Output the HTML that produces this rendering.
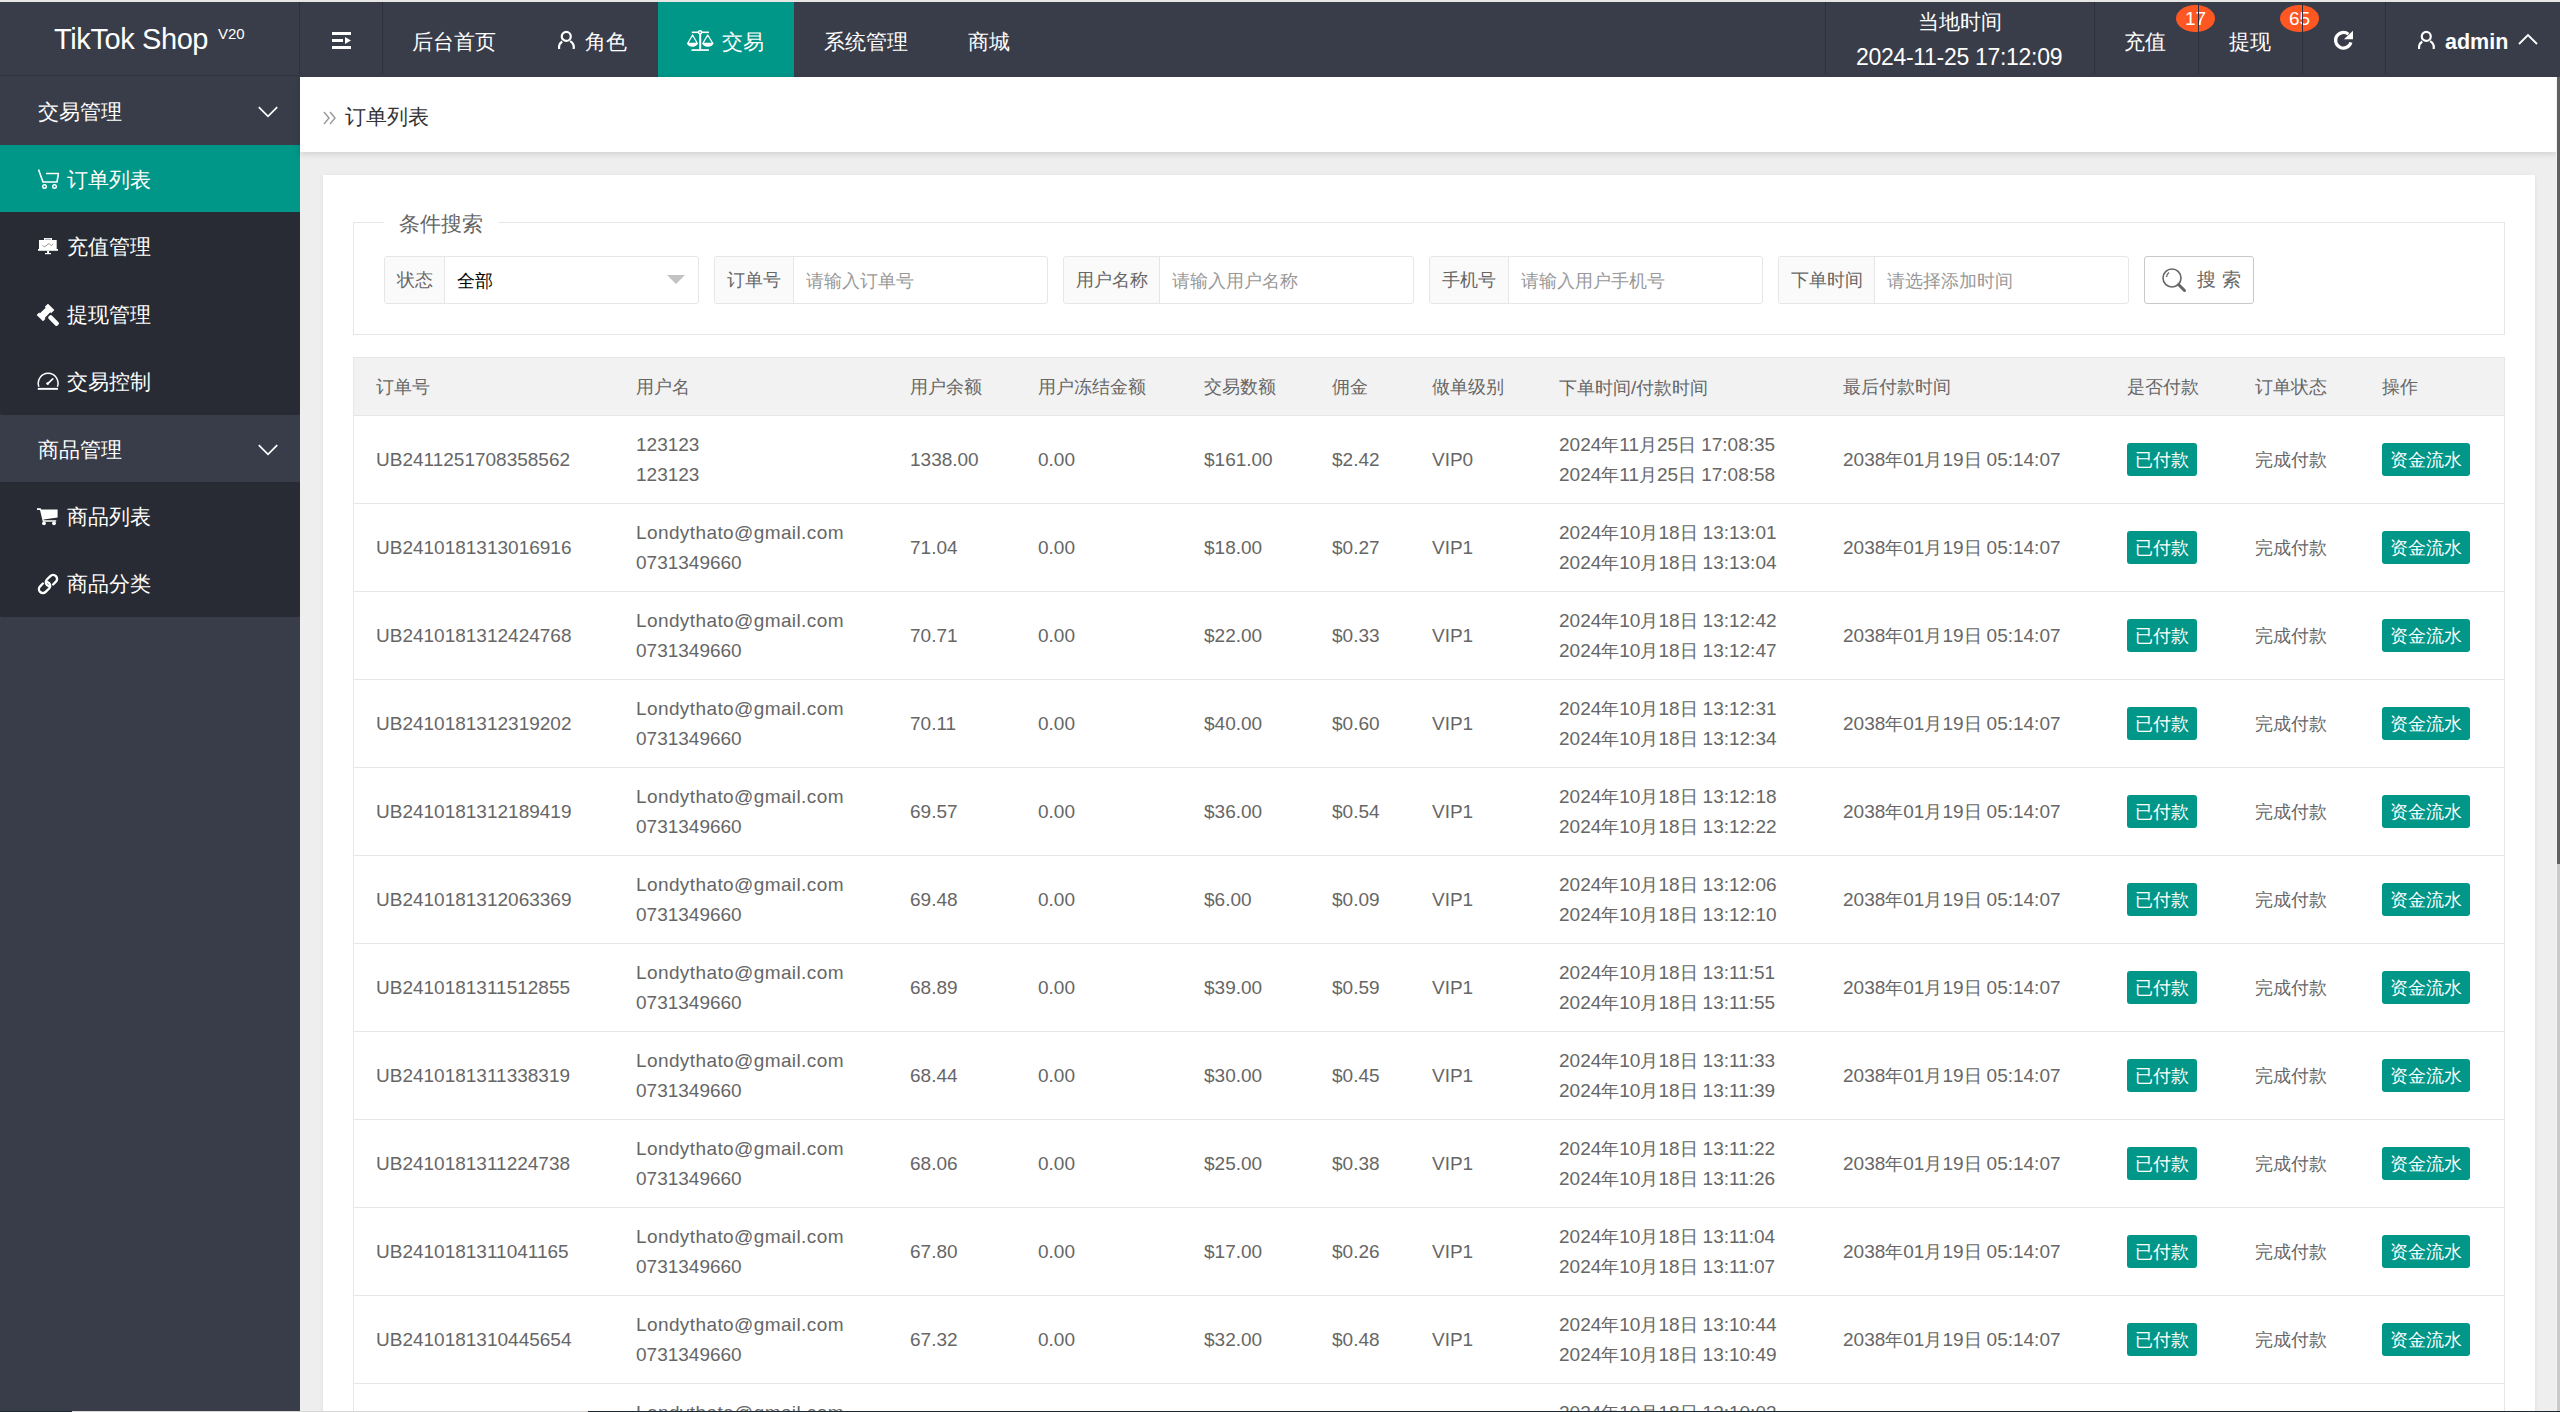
<!DOCTYPE html>
<html><head><meta charset="utf-8"><title>订单列表</title>
<style>
*{margin:0;padding:0;box-sizing:border-box}
html,body{width:2560px;height:1412px;overflow:hidden}
body{position:relative;background:#EEEEEE;font-family:"Liberation Sans",sans-serif;color:#666}
.abs{position:absolute}
#topstrip{position:absolute;left:0;top:0;width:2560px;height:2px;background:#E6E7E4}
#header{position:absolute;left:0;top:2px;width:2560px;height:75px;background:#393D49}
#header .sep{position:absolute;top:0;width:1px;height:72px;background:#2E313B}
#logo{position:absolute;left:0;top:0;width:299px;height:74px;border-bottom:1px solid #30333d}
#logo .t{position:absolute;left:54px;top:19px;font-size:29px;letter-spacing:-0.4px;color:#fff;line-height:36px;white-space:nowrap}
#logo .v{position:absolute;left:218px;top:24px;font-size:15px;color:#fff;line-height:16px}
.nav{position:absolute;top:2px;height:75px;line-height:75px;color:#fff;font-size:21px;white-space:nowrap}
.navact{position:absolute;left:658px;top:0;width:136px;height:75px;background:#009688}
#side{position:absolute;left:0;top:77px;width:300px;height:1335px;background:#393D49}
.sp{position:absolute;left:0;width:300px;height:68px;background:#393D49}
.sc{position:absolute;left:0;width:300px;background:#282B33;border-radius:0 0 2px 2px}
.si{position:absolute;left:0;width:300px;height:67px;color:#fff;font-size:21px;white-space:nowrap}
.si span.tx{position:absolute;left:67px;top:1px;line-height:67px}
.sact{background:#009688}
.chev{position:absolute;left:258px;width:20px;height:13px}
#crumb{position:absolute;left:300px;top:77px;width:2257px;height:75px;background:#fff;box-shadow:0 2px 6px rgba(0,0,0,.13)}
#crumb .ar{position:absolute;left:23px;top:29px}
#crumb .tx{position:absolute;left:345px;top:0}
#card{position:absolute;left:323px;top:175px;width:2212px;height:1300px;background:#fff;box-shadow:0 1px 4px rgba(0,0,0,.08)}
#fs{position:absolute;left:353px;top:222px;width:2152px;height:113px;border:1px solid #E6E6E6}
#legend{position:absolute;left:384px;top:209px;width:114px;height:30px;background:#fff;font-size:21px;color:#666;line-height:30px;text-align:center}
.ig{position:absolute;top:256px;height:48px;border:1px solid #E6E6E6;border-radius:3px;background:#fff;font-size:18px}
.ig .lb{position:absolute;left:0;top:0;height:46px;background:#FAFAFA;border-right:1px solid #E6E6E6;color:#666;line-height:46px;text-align:center;border-radius:3px 0 0 3px}
.ig .ph{position:absolute;top:1px;line-height:46px;color:#999}
#btn{position:absolute;left:2144px;top:256px;width:110px;height:48px;border:1px solid #C9C9C9;border-radius:3px;background:#fff;font-size:19px;color:#666;line-height:46px}
#table{position:absolute;left:0;top:0}
#thead{position:absolute;left:353px;top:357px;width:2152px;height:59px;background:#F2F2F2;border:1px solid #E6E6E6}
#tborder{position:absolute;left:353px;top:357px;width:2152px;height:1100px;border-left:1px solid #E6E6E6;border-right:1px solid #E6E6E6}
.th{position:absolute;top:359px;line-height:57px;font-size:18px;color:#666;white-space:nowrap}
.td{position:absolute;font-size:18px;line-height:30px;color:#666;white-space:nowrap}
.l{font-size:19px}
.badge{position:absolute;height:33px;line-height:35px;padding:0 8px;background:#009688;color:#fff;font-size:18px;border-radius:3px;white-space:nowrap}
.rowline{position:absolute;left:353px;width:2152px;height:1px;background:#E6E6E6}
#sb{position:absolute;left:2557px;top:77px;width:3px;height:1334px;background:#CACACA}
#sbt{position:absolute;left:2557px;top:77px;width:3px;height:787px;background:#606060}
#sbw{position:absolute;left:2556px;top:77px;width:1px;height:1334px;background:#F4F4F4}
#bot1{position:absolute;left:0;top:1411px;width:2560px;height:1px;background:#1E2830}
#bot2{position:absolute;left:72px;top:1411px;width:516px;height:1px;background:#D6D6D6}

</style></head>
<body>
<div id="topstrip"></div>
<div id="header">
  <div id="logo"><span class="t">TikTok Shop</span><span class="v">V20</span></div>
  <div class="sep" style="left:299px"></div>
  <div class="sep" style="left:382px"></div>
  <svg class="abs" style="left:332px;top:30px" width="20" height="17" viewBox="0 0 20 17"><rect x="0" y="0" width="19" height="3" fill="#fff"/><rect x="0" y="7" width="11" height="3" fill="#fff"/><path d="M13 5 L19 8.5 L13 12 Z" fill="#fff"/><rect x="0" y="14" width="19" height="3" fill="#fff"/></svg>
  <div class="nav" style="left:412px">后台首页</div>
  <svg class="abs" style="left:558px;top:26px" width="18" height="21" viewBox="0 0 18 21"><circle cx="8.25" cy="8.4" r="4.5" fill="none" stroke="#fff" stroke-width="2.2"/><path d="M1.21 21 A7.35 7.35 0 0 1 4.18 13.48 M12.07 13.13 A7.35 7.35 0 0 1 15.59 21" fill="none" stroke="#fff" stroke-width="2.2"/></svg>
  <div class="nav" style="left:585px">角色</div>
  <div class="navact"></div>
  <svg class="abs" style="left:686px;top:28px" width="28" height="22" viewBox="0 0 28 22"><rect x="5.7" y="1.5" width="17.2" height="1.6" fill="#fff"/><circle cx="14.1" cy="2.3" r="2.3" fill="#fff"/><circle cx="14.1" cy="2.3" r="0.8" fill="#009688"/><rect x="13.2" y="3" width="2" height="16.5" fill="#fff"/><rect x="5.5" y="19.2" width="17.4" height="1.7" fill="#fff"/><path d="M6.6 5 L1.6 13.5 L11.4 13.5 Z M21.7 5 L16.8 13.5 L26.9 13.5 Z" fill="none" stroke="#fff" stroke-width="1.3" stroke-linejoin="round"/><path d="M1.2 13.3 A5.2 3.4 0 0 0 11.6 13.3 Z M16.4 13.3 A5.45 3.4 0 0 0 27.3 13.3 Z" fill="#fff"/></svg>
  <div class="nav" style="left:722px">交易</div>
  <div class="nav" style="left:824px">系统管理</div>
  <div class="nav" style="left:968px">商城</div>
  <div class="sep" style="left:1825px"></div>
  <div class="abs" style="left:1918px;top:6px;font-size:21px;color:#fff;line-height:28px">当地时间</div>
  <div class="abs" style="left:1856px;top:41px;font-size:23px;letter-spacing:-0.3px;color:#fff;line-height:28px">2024-11-25 17:12:09</div>
  <div class="sep" style="left:2094px"></div>
  <div class="nav" style="left:2124px">充值</div>
  <div class="abs" style="left:2176px;top:3px;width:39px;height:27px;border-radius:50%;background:#FF5722;color:#fff;font-size:19px;line-height:27px;text-align:center">17</div>
  <div class="sep" style="left:2198px"></div>
  <div class="nav" style="left:2229px">提现</div>
  <div class="abs" style="left:2280px;top:3px;width:39px;height:27px;border-radius:50%;background:#FF5722;color:#fff;font-size:19px;line-height:27px;text-align:center">65</div>
  <div class="sep" style="left:2302px"></div>
  <svg class="abs" style="left:2333px;top:28px" width="22" height="22" viewBox="0 0 22 22"><path d="M15.4 4.3 A7.8 7.8 0 1 0 17.9 12.3" fill="none" stroke="#fff" stroke-width="3.2"/><path d="M20 0.8 L20 9.3 L10.9 9.3 Z" fill="#fff"/></svg>
  <div class="sep" style="left:2385px"></div>
  <svg class="abs" style="left:2418px;top:26px" width="18" height="21" viewBox="0 0 18 21"><circle cx="8.25" cy="8.4" r="4.5" fill="none" stroke="#fff" stroke-width="2.2"/><path d="M1.21 21 A7.35 7.35 0 0 1 4.18 13.48 M12.07 13.13 A7.35 7.35 0 0 1 15.59 21" fill="none" stroke="#fff" stroke-width="2.2"/></svg>
  <div class="nav" style="left:2445px;top:3px;font-weight:bold;font-size:21.5px">admin</div>
  <svg class="abs" style="left:2518px;top:31px" width="20" height="12" viewBox="0 0 20 12"><path d="M1 11 L10 2 L19 11" fill="none" stroke="#fff" stroke-width="1.8"/></svg>
</div>

<div id="side">
  <div class="sp" style="top:0"><span class="abs" style="left:38px;top:1px;line-height:68px;color:#fff;font-size:21px">交易管理</span>
    <svg class="chev" style="top:29px" width="20" height="13" viewBox="0 0 20 13"><path d="M0.8 1.2 L10 10.4 L19.2 1.2" fill="none" stroke="#fff" stroke-width="1.7"/></svg></div>
  <div class="sc" style="top:68px;height:270px">
    <div class="si sact" style="top:0">
      <svg class="abs" style="left:38px;top:24px" width="21" height="21" viewBox="0 0 21 21"><path d="M0.5 0.5 L5 13 L19 13 L20.5 4.5 L8 4.5" fill="none" stroke="#fff" stroke-width="1.6"/><circle cx="6.5" cy="17.5" r="1.8" fill="none" stroke="#fff" stroke-width="1.4"/><circle cx="16.5" cy="17.5" r="1.8" fill="none" stroke="#fff" stroke-width="1.4"/></svg>
      <span class="tx">订单列表</span></div>
    <div class="si" style="top:67px">
      <svg class="abs" style="left:38px;top:25px" width="20" height="18" viewBox="0 0 20 18"><rect x="6" y="1" width="8" height="2.5" fill="#fff"/><rect x="7" y="1.8" width="6" height="0.8" fill="#888"/><rect x="1" y="3" width="17.7" height="10" fill="#fff"/><rect x="0" y="12" width="20" height="1.8" fill="#fff"/><rect x="9.1" y="13.8" width="2" height="2.2" fill="#fff"/><rect x="7" y="16" width="6" height="1.2" fill="#fff"/><path d="M4.4 8.5 L6.5 9.8 L9 8 L11 6.5 L12.5 7.8 L13.5 8.6 L15 6.7" fill="none" stroke="#8a8a8a" stroke-width="0.9"/></svg>
      <span class="tx">充值管理</span></div>
    <div class="si" style="top:135px">
      <svg class="abs" style="left:37px;top:24px;overflow:visible" width="24" height="24" viewBox="0 0 24 24"><g transform="rotate(-45 8.5 8.5)" fill="#fff"><path d="M0.5 4 L4 4 L4 5.2 L12 5.2 L12 4 L16.5 4 L16.5 13 L12 13 L12 11.8 L4 11.8 L4 13 L0.5 13 Z"/><rect x="6.2" y="13.6" width="4.6" height="12.6" rx="1.6"/></g></svg>
      <span class="tx">提现管理</span></div>
    <div class="si" style="top:202px">
      <svg class="abs" style="left:37px;top:24px" width="22" height="20" viewBox="0 0 22 20"><path d="M1.89 15.75 A9.9 9.9 0 1 1 20.41 15.75" fill="none" stroke="#fff" stroke-width="1.5"/><rect x="0.8" y="16.9" width="20.2" height="1.9" fill="#fff"/><circle cx="10.7" cy="12.6" r="1.4" fill="#fff"/><path d="M10.7 12.6 L15.8 7.8" stroke="#fff" stroke-width="1.6" stroke-linecap="round"/></svg>
      <span class="tx">交易控制</span></div>
  </div>
  <div class="sp" style="top:338px;height:67px"><span class="abs" style="left:38px;top:1px;line-height:67px;color:#fff;font-size:21px">商品管理</span>
    <svg class="chev" style="top:29px" width="20" height="13" viewBox="0 0 20 13"><path d="M0.8 1.2 L10 10.4 L19.2 1.2" fill="none" stroke="#fff" stroke-width="1.7"/></svg></div>
  <div class="sc" style="top:405px;height:135px">
    <div class="si" style="top:0">
      <svg class="abs" style="left:37px;top:26px" width="21" height="18" viewBox="0 0 21 18"><path d="M0 0.3 L3.6 0.3 L4.3 1.6 L20.6 1.6 L20.6 9.6 L6.6 11.4 L7 12.2 L19.2 12.2 L19.2 13.8 L5.8 13.8 L3 2 L0 2 Z" fill="#fff"/><circle cx="7" cy="15.3" r="1.9" fill="#fff"/><circle cx="17" cy="15.3" r="1.9" fill="#fff"/></svg>
      <span class="tx">商品列表</span></div>
    <div class="si" style="top:67px">
      <svg class="abs" style="left:35px;top:22px" width="26" height="26" viewBox="0 0 23 23"><g transform="rotate(-45 11.5 11.5)" fill="none" stroke="#fff" stroke-width="2.1" stroke-linecap="round"><path d="M8.6 8 L5.1 8 A3.5 3.5 0 0 0 5.1 15 L9.4 15 A3.5 3.5 0 0 0 12.3 9.6"/><path d="M14.4 15 L17.9 15 A3.5 3.5 0 0 0 17.9 8 L13.6 8 A3.5 3.5 0 0 0 10.7 13.4"/></g></svg>
      <span class="tx">商品分类</span></div>
  </div>
</div>

<div id="crumb">
  <svg class="ar" style="top:34px" width="14" height="14" viewBox="0 0 14 14"><path d="M1 1 L6 7 L1 13 M7 1 L12 7 L7 13" fill="none" stroke="#999" stroke-width="1.4"/></svg>
  <span class="abs" style="left:45px;top:2px;line-height:75px;font-size:21px;color:#333">订单列表</span>
</div>

<div id="card"></div>
<div id="fs"></div>
<div id="legend">条件搜索</div>

<div class="ig" style="left:384px;width:315px">
  <div class="lb" style="width:60px">状态</div>
  <div class="ph" style="left:72px;color:#000">全部</div>
  <svg class="abs" style="left:282px;top:18px" width="18" height="10" viewBox="0 0 18 10"><path d="M0 0 L18 0 L9 9 Z" fill="#C2C2C2"/></svg>
</div>
<div class="ig" style="left:714px;width:334px">
  <div class="lb" style="width:79px">订单号</div>
  <div class="ph" style="left:91px">请输入订单号</div>
</div>
<div class="ig" style="left:1063px;width:351px">
  <div class="lb" style="width:96px">用户名称</div>
  <div class="ph" style="left:108px">请输入用户名称</div>
</div>
<div class="ig" style="left:1429px;width:334px">
  <div class="lb" style="width:79px">手机号</div>
  <div class="ph" style="left:91px">请输入用户手机号</div>
</div>
<div class="ig" style="left:1778px;width:351px">
  <div class="lb" style="width:96px">下单时间</div>
  <div class="ph" style="left:108px">请选择添加时间</div>
</div>
<div id="btn">
  <svg class="abs" style="left:17px;top:11px" width="25" height="25" viewBox="0 0 25 25"><circle cx="10" cy="10" r="9" fill="none" stroke="#666" stroke-width="1.6"/><path d="M4.5 9 A6 6 0 0 1 7 4.5" fill="none" stroke="#666" stroke-width="1.3"/><path d="M16.5 16.5 L22.5 22.5" stroke="#666" stroke-width="3" stroke-linecap="round"/></svg>
  <span class="abs" style="left:52px;top:0;letter-spacing:6px">搜索</span>
</div>

<div id="tborder"></div>
<div id="table">
<div id="thead"></div>
<div class="th" style="left:376px">订单号</div>
<div class="th" style="left:636px">用户名</div>
<div class="th" style="left:910px">用户余额</div>
<div class="th" style="left:1038px">用户冻结金额</div>
<div class="th" style="left:1204px">交易数额</div>
<div class="th" style="left:1332px">佣金</div>
<div class="th" style="left:1432px">做单级别</div>
<div class="th" style="left:1559px">下单时间<span class="l">/</span>付款时间</div>
<div class="th" style="left:1843px">最后付款时间</div>
<div class="th" style="left:2127px">是否付款</div>
<div class="th" style="left:2255px">订单状态</div>
<div class="th" style="left:2382px">操作</div>
<div class="td" style="left:376px;top:445px"><span class="l">UB2411251708358562</span></div>
<div class="td" style="left:636px;top:430px"><span class="l">123123</span><br><span class="l">123123</span></div>
<div class="td" style="left:910px;top:445px"><span class="l">1338.00</span></div>
<div class="td" style="left:1038px;top:445px"><span class="l">0.00</span></div>
<div class="td" style="left:1204px;top:445px"><span class="l">$161.00</span></div>
<div class="td" style="left:1332px;top:445px"><span class="l">$2.42</span></div>
<div class="td" style="left:1432px;top:445px"><span class="l">VIP0</span></div>
<div class="td" style="left:1559px;top:430px"><span class="l">2024</span>年<span class="l">11</span>月<span class="l">25</span>日 <span class="l">17:08:35</span><br><span class="l">2024</span>年<span class="l">11</span>月<span class="l">25</span>日 <span class="l">17:08:58</span></div>
<div class="td" style="left:1843px;top:445px"><span class="l">2038</span>年<span class="l">01</span>月<span class="l">19</span>日 <span class="l">05:14:07</span></div>
<div class="badge" style="left:2127px;top:443px">已付款</div>
<div class="td" style="left:2255px;top:445px">完成付款</div>
<div class="badge" style="left:2382px;top:443px">资金流水</div>
<div class="rowline" style="top:503px"></div>
<div class="td" style="left:376px;top:533px"><span class="l">UB2410181313016916</span></div>
<div class="td" style="left:636px;top:518px"><span class="l" style="letter-spacing:0.4px">Londythato@gmail.com</span><br><span class="l">0731349660</span></div>
<div class="td" style="left:910px;top:533px"><span class="l">71.04</span></div>
<div class="td" style="left:1038px;top:533px"><span class="l">0.00</span></div>
<div class="td" style="left:1204px;top:533px"><span class="l">$18.00</span></div>
<div class="td" style="left:1332px;top:533px"><span class="l">$0.27</span></div>
<div class="td" style="left:1432px;top:533px"><span class="l">VIP1</span></div>
<div class="td" style="left:1559px;top:518px"><span class="l">2024</span>年<span class="l">10</span>月<span class="l">18</span>日 <span class="l">13:13:01</span><br><span class="l">2024</span>年<span class="l">10</span>月<span class="l">18</span>日 <span class="l">13:13:04</span></div>
<div class="td" style="left:1843px;top:533px"><span class="l">2038</span>年<span class="l">01</span>月<span class="l">19</span>日 <span class="l">05:14:07</span></div>
<div class="badge" style="left:2127px;top:531px">已付款</div>
<div class="td" style="left:2255px;top:533px">完成付款</div>
<div class="badge" style="left:2382px;top:531px">资金流水</div>
<div class="rowline" style="top:591px"></div>
<div class="td" style="left:376px;top:621px"><span class="l">UB2410181312424768</span></div>
<div class="td" style="left:636px;top:606px"><span class="l" style="letter-spacing:0.4px">Londythato@gmail.com</span><br><span class="l">0731349660</span></div>
<div class="td" style="left:910px;top:621px"><span class="l">70.71</span></div>
<div class="td" style="left:1038px;top:621px"><span class="l">0.00</span></div>
<div class="td" style="left:1204px;top:621px"><span class="l">$22.00</span></div>
<div class="td" style="left:1332px;top:621px"><span class="l">$0.33</span></div>
<div class="td" style="left:1432px;top:621px"><span class="l">VIP1</span></div>
<div class="td" style="left:1559px;top:606px"><span class="l">2024</span>年<span class="l">10</span>月<span class="l">18</span>日 <span class="l">13:12:42</span><br><span class="l">2024</span>年<span class="l">10</span>月<span class="l">18</span>日 <span class="l">13:12:47</span></div>
<div class="td" style="left:1843px;top:621px"><span class="l">2038</span>年<span class="l">01</span>月<span class="l">19</span>日 <span class="l">05:14:07</span></div>
<div class="badge" style="left:2127px;top:619px">已付款</div>
<div class="td" style="left:2255px;top:621px">完成付款</div>
<div class="badge" style="left:2382px;top:619px">资金流水</div>
<div class="rowline" style="top:679px"></div>
<div class="td" style="left:376px;top:709px"><span class="l">UB2410181312319202</span></div>
<div class="td" style="left:636px;top:694px"><span class="l" style="letter-spacing:0.4px">Londythato@gmail.com</span><br><span class="l">0731349660</span></div>
<div class="td" style="left:910px;top:709px"><span class="l">70.11</span></div>
<div class="td" style="left:1038px;top:709px"><span class="l">0.00</span></div>
<div class="td" style="left:1204px;top:709px"><span class="l">$40.00</span></div>
<div class="td" style="left:1332px;top:709px"><span class="l">$0.60</span></div>
<div class="td" style="left:1432px;top:709px"><span class="l">VIP1</span></div>
<div class="td" style="left:1559px;top:694px"><span class="l">2024</span>年<span class="l">10</span>月<span class="l">18</span>日 <span class="l">13:12:31</span><br><span class="l">2024</span>年<span class="l">10</span>月<span class="l">18</span>日 <span class="l">13:12:34</span></div>
<div class="td" style="left:1843px;top:709px"><span class="l">2038</span>年<span class="l">01</span>月<span class="l">19</span>日 <span class="l">05:14:07</span></div>
<div class="badge" style="left:2127px;top:707px">已付款</div>
<div class="td" style="left:2255px;top:709px">完成付款</div>
<div class="badge" style="left:2382px;top:707px">资金流水</div>
<div class="rowline" style="top:767px"></div>
<div class="td" style="left:376px;top:797px"><span class="l">UB2410181312189419</span></div>
<div class="td" style="left:636px;top:782px"><span class="l" style="letter-spacing:0.4px">Londythato@gmail.com</span><br><span class="l">0731349660</span></div>
<div class="td" style="left:910px;top:797px"><span class="l">69.57</span></div>
<div class="td" style="left:1038px;top:797px"><span class="l">0.00</span></div>
<div class="td" style="left:1204px;top:797px"><span class="l">$36.00</span></div>
<div class="td" style="left:1332px;top:797px"><span class="l">$0.54</span></div>
<div class="td" style="left:1432px;top:797px"><span class="l">VIP1</span></div>
<div class="td" style="left:1559px;top:782px"><span class="l">2024</span>年<span class="l">10</span>月<span class="l">18</span>日 <span class="l">13:12:18</span><br><span class="l">2024</span>年<span class="l">10</span>月<span class="l">18</span>日 <span class="l">13:12:22</span></div>
<div class="td" style="left:1843px;top:797px"><span class="l">2038</span>年<span class="l">01</span>月<span class="l">19</span>日 <span class="l">05:14:07</span></div>
<div class="badge" style="left:2127px;top:795px">已付款</div>
<div class="td" style="left:2255px;top:797px">完成付款</div>
<div class="badge" style="left:2382px;top:795px">资金流水</div>
<div class="rowline" style="top:855px"></div>
<div class="td" style="left:376px;top:885px"><span class="l">UB2410181312063369</span></div>
<div class="td" style="left:636px;top:870px"><span class="l" style="letter-spacing:0.4px">Londythato@gmail.com</span><br><span class="l">0731349660</span></div>
<div class="td" style="left:910px;top:885px"><span class="l">69.48</span></div>
<div class="td" style="left:1038px;top:885px"><span class="l">0.00</span></div>
<div class="td" style="left:1204px;top:885px"><span class="l">$6.00</span></div>
<div class="td" style="left:1332px;top:885px"><span class="l">$0.09</span></div>
<div class="td" style="left:1432px;top:885px"><span class="l">VIP1</span></div>
<div class="td" style="left:1559px;top:870px"><span class="l">2024</span>年<span class="l">10</span>月<span class="l">18</span>日 <span class="l">13:12:06</span><br><span class="l">2024</span>年<span class="l">10</span>月<span class="l">18</span>日 <span class="l">13:12:10</span></div>
<div class="td" style="left:1843px;top:885px"><span class="l">2038</span>年<span class="l">01</span>月<span class="l">19</span>日 <span class="l">05:14:07</span></div>
<div class="badge" style="left:2127px;top:883px">已付款</div>
<div class="td" style="left:2255px;top:885px">完成付款</div>
<div class="badge" style="left:2382px;top:883px">资金流水</div>
<div class="rowline" style="top:943px"></div>
<div class="td" style="left:376px;top:973px"><span class="l">UB2410181311512855</span></div>
<div class="td" style="left:636px;top:958px"><span class="l" style="letter-spacing:0.4px">Londythato@gmail.com</span><br><span class="l">0731349660</span></div>
<div class="td" style="left:910px;top:973px"><span class="l">68.89</span></div>
<div class="td" style="left:1038px;top:973px"><span class="l">0.00</span></div>
<div class="td" style="left:1204px;top:973px"><span class="l">$39.00</span></div>
<div class="td" style="left:1332px;top:973px"><span class="l">$0.59</span></div>
<div class="td" style="left:1432px;top:973px"><span class="l">VIP1</span></div>
<div class="td" style="left:1559px;top:958px"><span class="l">2024</span>年<span class="l">10</span>月<span class="l">18</span>日 <span class="l">13:11:51</span><br><span class="l">2024</span>年<span class="l">10</span>月<span class="l">18</span>日 <span class="l">13:11:55</span></div>
<div class="td" style="left:1843px;top:973px"><span class="l">2038</span>年<span class="l">01</span>月<span class="l">19</span>日 <span class="l">05:14:07</span></div>
<div class="badge" style="left:2127px;top:971px">已付款</div>
<div class="td" style="left:2255px;top:973px">完成付款</div>
<div class="badge" style="left:2382px;top:971px">资金流水</div>
<div class="rowline" style="top:1031px"></div>
<div class="td" style="left:376px;top:1061px"><span class="l">UB2410181311338319</span></div>
<div class="td" style="left:636px;top:1046px"><span class="l" style="letter-spacing:0.4px">Londythato@gmail.com</span><br><span class="l">0731349660</span></div>
<div class="td" style="left:910px;top:1061px"><span class="l">68.44</span></div>
<div class="td" style="left:1038px;top:1061px"><span class="l">0.00</span></div>
<div class="td" style="left:1204px;top:1061px"><span class="l">$30.00</span></div>
<div class="td" style="left:1332px;top:1061px"><span class="l">$0.45</span></div>
<div class="td" style="left:1432px;top:1061px"><span class="l">VIP1</span></div>
<div class="td" style="left:1559px;top:1046px"><span class="l">2024</span>年<span class="l">10</span>月<span class="l">18</span>日 <span class="l">13:11:33</span><br><span class="l">2024</span>年<span class="l">10</span>月<span class="l">18</span>日 <span class="l">13:11:39</span></div>
<div class="td" style="left:1843px;top:1061px"><span class="l">2038</span>年<span class="l">01</span>月<span class="l">19</span>日 <span class="l">05:14:07</span></div>
<div class="badge" style="left:2127px;top:1059px">已付款</div>
<div class="td" style="left:2255px;top:1061px">完成付款</div>
<div class="badge" style="left:2382px;top:1059px">资金流水</div>
<div class="rowline" style="top:1119px"></div>
<div class="td" style="left:376px;top:1149px"><span class="l">UB2410181311224738</span></div>
<div class="td" style="left:636px;top:1134px"><span class="l" style="letter-spacing:0.4px">Londythato@gmail.com</span><br><span class="l">0731349660</span></div>
<div class="td" style="left:910px;top:1149px"><span class="l">68.06</span></div>
<div class="td" style="left:1038px;top:1149px"><span class="l">0.00</span></div>
<div class="td" style="left:1204px;top:1149px"><span class="l">$25.00</span></div>
<div class="td" style="left:1332px;top:1149px"><span class="l">$0.38</span></div>
<div class="td" style="left:1432px;top:1149px"><span class="l">VIP1</span></div>
<div class="td" style="left:1559px;top:1134px"><span class="l">2024</span>年<span class="l">10</span>月<span class="l">18</span>日 <span class="l">13:11:22</span><br><span class="l">2024</span>年<span class="l">10</span>月<span class="l">18</span>日 <span class="l">13:11:26</span></div>
<div class="td" style="left:1843px;top:1149px"><span class="l">2038</span>年<span class="l">01</span>月<span class="l">19</span>日 <span class="l">05:14:07</span></div>
<div class="badge" style="left:2127px;top:1147px">已付款</div>
<div class="td" style="left:2255px;top:1149px">完成付款</div>
<div class="badge" style="left:2382px;top:1147px">资金流水</div>
<div class="rowline" style="top:1207px"></div>
<div class="td" style="left:376px;top:1237px"><span class="l">UB2410181311041165</span></div>
<div class="td" style="left:636px;top:1222px"><span class="l" style="letter-spacing:0.4px">Londythato@gmail.com</span><br><span class="l">0731349660</span></div>
<div class="td" style="left:910px;top:1237px"><span class="l">67.80</span></div>
<div class="td" style="left:1038px;top:1237px"><span class="l">0.00</span></div>
<div class="td" style="left:1204px;top:1237px"><span class="l">$17.00</span></div>
<div class="td" style="left:1332px;top:1237px"><span class="l">$0.26</span></div>
<div class="td" style="left:1432px;top:1237px"><span class="l">VIP1</span></div>
<div class="td" style="left:1559px;top:1222px"><span class="l">2024</span>年<span class="l">10</span>月<span class="l">18</span>日 <span class="l">13:11:04</span><br><span class="l">2024</span>年<span class="l">10</span>月<span class="l">18</span>日 <span class="l">13:11:07</span></div>
<div class="td" style="left:1843px;top:1237px"><span class="l">2038</span>年<span class="l">01</span>月<span class="l">19</span>日 <span class="l">05:14:07</span></div>
<div class="badge" style="left:2127px;top:1235px">已付款</div>
<div class="td" style="left:2255px;top:1237px">完成付款</div>
<div class="badge" style="left:2382px;top:1235px">资金流水</div>
<div class="rowline" style="top:1295px"></div>
<div class="td" style="left:376px;top:1325px"><span class="l">UB2410181310445654</span></div>
<div class="td" style="left:636px;top:1310px"><span class="l" style="letter-spacing:0.4px">Londythato@gmail.com</span><br><span class="l">0731349660</span></div>
<div class="td" style="left:910px;top:1325px"><span class="l">67.32</span></div>
<div class="td" style="left:1038px;top:1325px"><span class="l">0.00</span></div>
<div class="td" style="left:1204px;top:1325px"><span class="l">$32.00</span></div>
<div class="td" style="left:1332px;top:1325px"><span class="l">$0.48</span></div>
<div class="td" style="left:1432px;top:1325px"><span class="l">VIP1</span></div>
<div class="td" style="left:1559px;top:1310px"><span class="l">2024</span>年<span class="l">10</span>月<span class="l">18</span>日 <span class="l">13:10:44</span><br><span class="l">2024</span>年<span class="l">10</span>月<span class="l">18</span>日 <span class="l">13:10:49</span></div>
<div class="td" style="left:1843px;top:1325px"><span class="l">2038</span>年<span class="l">01</span>月<span class="l">19</span>日 <span class="l">05:14:07</span></div>
<div class="badge" style="left:2127px;top:1323px">已付款</div>
<div class="td" style="left:2255px;top:1325px">完成付款</div>
<div class="badge" style="left:2382px;top:1323px">资金流水</div>
<div class="rowline" style="top:1383px"></div>
<div class="td" style="left:376px;top:1413px"><span class="l">UB2410181310032200</span></div>
<div class="td" style="left:636px;top:1398px"><span class="l" style="letter-spacing:0.4px">Londythato@gmail.com</span><br><span class="l">0731349660</span></div>
<div class="td" style="left:910px;top:1413px"><span class="l">66.84</span></div>
<div class="td" style="left:1038px;top:1413px"><span class="l">0.00</span></div>
<div class="td" style="left:1204px;top:1413px"><span class="l">$20.00</span></div>
<div class="td" style="left:1332px;top:1413px"><span class="l">$0.30</span></div>
<div class="td" style="left:1432px;top:1413px"><span class="l">VIP1</span></div>
<div class="td" style="left:1559px;top:1398px"><span class="l">2024</span>年<span class="l">10</span>月<span class="l">18</span>日 <span class="l">13:10:03</span><br><span class="l">2024</span>年<span class="l">10</span>月<span class="l">18</span>日 <span class="l">13:10:08</span></div>
<div class="td" style="left:1843px;top:1413px"><span class="l">2038</span>年<span class="l">01</span>月<span class="l">19</span>日 <span class="l">05:14:07</span></div>
<div class="badge" style="left:2127px;top:1411px">已付款</div>
<div class="td" style="left:2255px;top:1413px">完成付款</div>
<div class="badge" style="left:2382px;top:1411px">资金流水</div>
<div class="rowline" style="top:1471px"></div>
</div>

<div id="sbw"></div>
<div id="sb"></div>
<div id="sbt"></div>
<div id="bot1"></div>
<div id="bot2"></div>

</body></html>
